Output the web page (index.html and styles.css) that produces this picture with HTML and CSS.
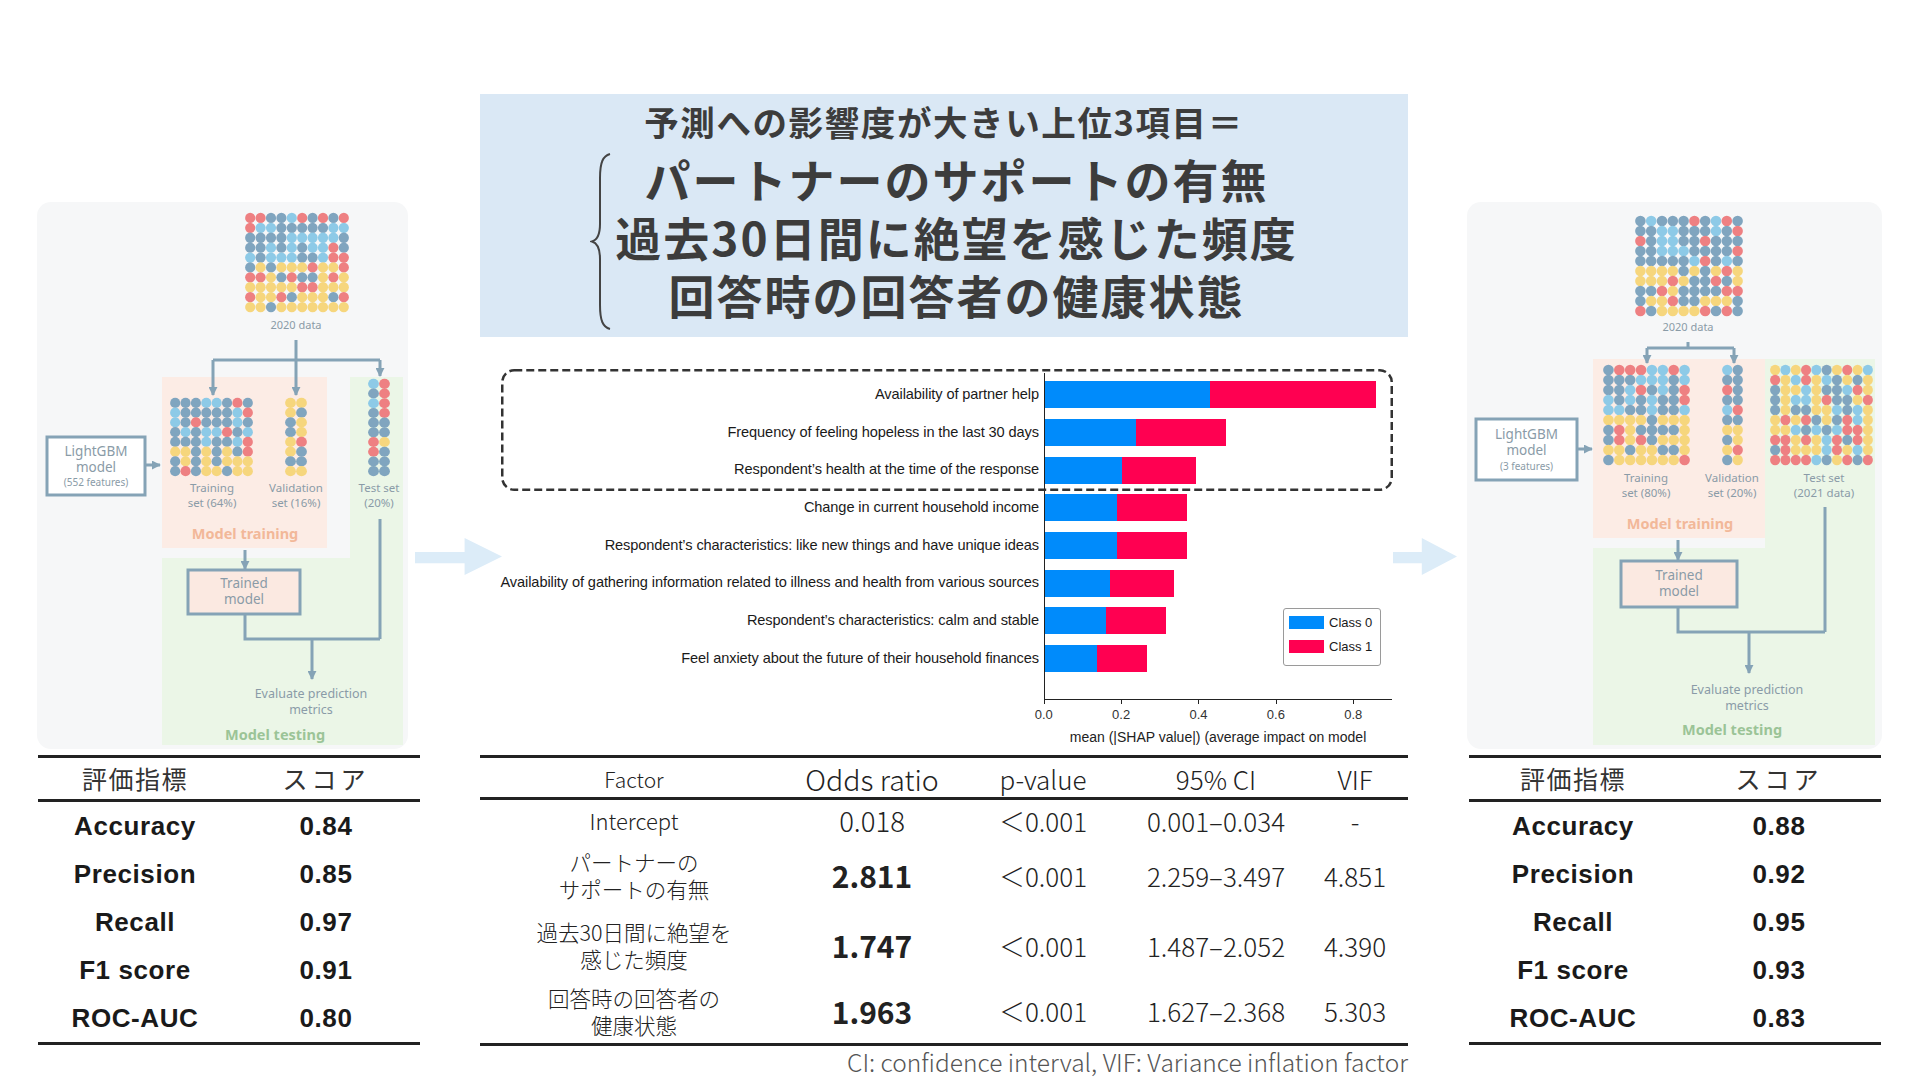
FILE: index.html
```html
<!DOCTYPE html>
<html lang="ja">
<head>
<meta charset="utf-8">
<title>予測への影響度</title>
<link rel="stylesheet" href="styles.css">
</head>
<body>
<div class="page">

  <section class="col col-left">
    <div class="panel panel-left">
      <svg class="diagram" width="371" height="547" viewBox="0 0 371 547">
        <defs>
          <marker id="ahL" viewBox="0 0 10 10" refX="9" refY="5" markerWidth="3" markerHeight="3" orient="auto"><path d="M0 0 L10 5 L0 10 Z" class="ah"/></marker>
        </defs>
        <path class="zone-test" d="M313 175 H366 V543 H125 V356 H313 Z"/>
        <rect class="zone-train" x="125" y="175" width="165" height="171"/>
        <g class="dots" data-x="208" data-y="11" data-w="104" data-h="99" data-cols="10" data-rows="10" data-split="5" data-seed="11"></g>
        <g class="dots" data-x="133" data-y="196" data-w="83" data-h="78" data-cols="8" data-rows="8" data-split="5" data-seed="23"></g>
        <g class="dots" data-x="248" data-y="196" data-w="22" data-h="78" data-cols="2" data-rows="8" data-split="0" data-seed="37"></g>
        <g class="dots" data-x="331" data-y="177" data-w="22" data-h="97" data-cols="2" data-rows="10" data-split="5" data-seed="41"></g>
        <text class="t-small" x="259" y="127">2020 data</text>
        <path class="ln" d="M259 138 V158"/>
        <path class="ln" d="M176 158 H343"/>
        <path class="ln" d="M176 158 V193" marker-end="url(#ahL)"/>
        <path class="ln" d="M259 158 V193" marker-end="url(#ahL)"/>
        <path class="ln" d="M343 158 V174" marker-end="url(#ahL)"/>
        <rect class="box" x="10" y="235" width="98" height="58"/>
        <text class="t-box" x="59" y="254">LightGBM</text>
        <text class="t-box" x="59" y="270">model</text>
        <text class="t-tiny" x="59" y="284">(552 features)</text>
        <path class="ln" d="M108 263 H123" marker-end="url(#ahL)"/>
        <text class="t-label" x="175" y="290">Training</text>
        <text class="t-label" x="175" y="305">set (64%)</text>
        <text class="t-label" x="259" y="290">Validation</text>
        <text class="t-label" x="259" y="305">set (16%)</text>
        <text class="t-label" x="342" y="290">Test set</text>
        <text class="t-label" x="342" y="305">(20%)</text>
        <text class="t-zone t-train" x="208" y="337">Model training</text>
        <path class="ln" d="M208 348 V367" marker-end="url(#ahL)"/>
        <rect class="box box-pink" x="151" y="368" width="112" height="44"/>
        <text class="t-box" x="207" y="386">Trained</text>
        <text class="t-box" x="207" y="402">model</text>
        <path class="ln" d="M208 412 V437 H343"/>
        <path class="ln" d="M343 317 V437"/>
        <path class="ln" d="M275 437 V477" marker-end="url(#ahL)"/>
        <text class="t-eval" x="274" y="496">Evaluate prediction</text>
        <text class="t-eval" x="274" y="512">metrics</text>
        <text class="t-zone t-test" x="238" y="538">Model testing</text>
      </svg>
    </div>
    <div class="metrics metrics-left">
      <div class="m-row m-head"><span>評価指標</span><span class="kana">スコア</span></div>
      <div class="m-row"><span>Accuracy</span><span>0.84</span></div>
      <div class="m-row"><span>Precision</span><span>0.85</span></div>
      <div class="m-row"><span>Recall</span><span>0.97</span></div>
      <div class="m-row"><span>F1 score</span><span>0.91</span></div>
      <div class="m-row"><span>ROC-AUC</span><span>0.80</span></div>
    </div>
  </section>

  <section class="col col-center">
    <div class="headline">
      <div class="headline-title">予測への影響度が大きい上位3項目＝</div>
      <div class="headline-body">
        <svg class="brace" width="22" height="179" viewBox="0 0 22 179">
          <path d="M20 2 C13 4 10 10 10 26 L10 72 C10 83 7 88 2 89.5 C7 91 10 96 10 107 L10 153 C10 169 13 175 20 177"/>
        </svg>
        <div class="headline-lines">
          <span>パートナーのサポートの有無</span>
          <span>過去30日間に絶望を感じた頻度</span>
          <span>回答時の回答者の健康状態</span>
        </div>
      </div>
    </div>

    <div class="chart">
      <div class="chart-body">
        <div class="chart-labels">
          <span>Availability of partner help</span>
          <span>Frequency of feeling hopeless in the last 30 days</span>
          <span>Respondent’s health at the time of the response</span>
          <span>Change in current household income</span>
          <span>Respondent’s characteristics: like new things and have unique ideas</span>
          <span>Availability of gathering information related to illness and health from various sources</span>
          <span>Respondent’s characteristics: calm and stable</span>
          <span>Feel anxiety about the future of their household finances</span>
        </div>
        <div class="chart-plot">
          <div class="bar-row"><span class="seg c0" style="width:165px"></span><span class="seg c1" style="width:166px"></span></div>
          <div class="bar-row"><span class="seg c0" style="width:90.5px"></span><span class="seg c1" style="width:90.5px"></span></div>
          <div class="bar-row"><span class="seg c0" style="width:77px"></span><span class="seg c1" style="width:74px"></span></div>
          <div class="bar-row"><span class="seg c0" style="width:72px"></span><span class="seg c1" style="width:70px"></span></div>
          <div class="bar-row"><span class="seg c0" style="width:71.5px"></span><span class="seg c1" style="width:70px"></span></div>
          <div class="bar-row"><span class="seg c0" style="width:64.5px"></span><span class="seg c1" style="width:64px"></span></div>
          <div class="bar-row"><span class="seg c0" style="width:61px"></span><span class="seg c1" style="width:60px"></span></div>
          <div class="bar-row"><span class="seg c0" style="width:51.5px"></span><span class="seg c1" style="width:50px"></span></div>
        </div>
      </div>
      <div class="ticks">
        <span>0.0</span><span>0.2</span><span>0.4</span><span>0.6</span><span>0.8</span>
      </div>
      <div class="axis-title">mean (|SHAP value|) (average impact on model</div>
      <svg class="hilite" width="892" height="122" viewBox="0 0 892 122">
        <rect x="1.25" y="1.25" width="889.5" height="119.5" rx="12" ry="12"/>
      </svg>
      <div class="legend">
        <div class="legend-item"><span class="swatch c0"></span>Class 0</div>
        <div class="legend-item"><span class="swatch c1"></span>Class 1</div>
      </div>
    </div>

    <div class="odds">
      <div class="o-row o-head">
        <span class="h-factor">Factor</span>
        <span class="h-odds">Odds ratio</span>
        <span>p-value</span>
        <span>95% CI</span>
        <span>VIF</span>
      </div>
      <div class="o-row o-r1">
        <span class="o-factor-en">Intercept</span>
        <span class="o-val">0.018</span>
        <span>＜0.001</span>
        <span>0.001–0.034</span>
        <span>-</span>
      </div>
      <div class="o-row o-r2">
        <span class="o-factor">パートナーの<br>サポートの有無</span>
        <span class="o-bold">2.811</span>
        <span>＜0.001</span>
        <span>2.259–3.497</span>
        <span>4.851</span>
      </div>
      <div class="o-row o-r3">
        <span class="o-factor">過去30日間に絶望を<br>感じた頻度</span>
        <span class="o-bold">1.747</span>
        <span>＜0.001</span>
        <span>1.487–2.052</span>
        <span>4.390</span>
      </div>
      <div class="o-row o-r4">
        <span class="o-factor">回答時の回答者の<br>健康状態</span>
        <span class="o-bold">1.963</span>
        <span>＜0.001</span>
        <span>1.627–2.368</span>
        <span>5.303</span>
      </div>
    </div>
    <p class="footnote">CI: confidence interval, VIF: Variance inflation factor</p>
  </section>

  <section class="col col-right">
    <div class="panel panel-right">
      <svg class="diagram" width="415" height="547" viewBox="0 0 415 547">
        <defs>
          <marker id="ahR" viewBox="0 0 10 10" refX="9" refY="5" markerWidth="3" markerHeight="3" orient="auto"><path d="M0 0 L10 5 L0 10 Z" class="ah"/></marker>
        </defs>
        <path class="zone-test" d="M298 157 H408 V543 H126 V346 H298 Z"/>
        <rect class="zone-train" x="126" y="157" width="172" height="179"/>
        <g class="dots" data-x="168" data-y="14" data-w="108" data-h="100" data-cols="10" data-rows="10" data-split="5" data-seed="53"></g>
        <g class="dots" data-x="136" data-y="163" data-w="87" data-h="100" data-cols="8" data-rows="10" data-split="5" data-seed="67"></g>
        <g class="dots" data-x="255" data-y="163" data-w="21" data-h="100" data-cols="2" data-rows="10" data-split="6" data-seed="71"></g>
        <g class="dots" data-x="303" data-y="163" data-w="103" data-h="100" data-cols="10" data-rows="10" data-split="4" data-seed="89" data-mix="1"></g>
        <text class="t-small" x="221" y="129">2020 data</text>
        <path class="ln" d="M221 140 V146"/>
        <path class="ln" d="M180 146 H267"/>
        <path class="ln" d="M180 146 V161" marker-end="url(#ahR)"/>
        <path class="ln" d="M267 146 V161" marker-end="url(#ahR)"/>
        <rect class="box" x="9" y="217" width="101" height="61"/>
        <text class="t-box" x="59.5" y="237">LightGBM</text>
        <text class="t-box" x="59.5" y="253">model</text>
        <text class="t-tiny" x="59.5" y="268">(3 features)</text>
        <path class="ln" d="M110 247 H125" marker-end="url(#ahR)"/>
        <text class="t-label" x="179" y="280">Training</text>
        <text class="t-label" x="179" y="295">set (80%)</text>
        <text class="t-label" x="265" y="280">Validation</text>
        <text class="t-label" x="265" y="295">set (20%)</text>
        <text class="t-label" x="357" y="280">Test set</text>
        <text class="t-label" x="357" y="295">(2021 data)</text>
        <text class="t-zone t-train" x="213" y="327">Model training</text>
        <path class="ln" d="M211 338 V358" marker-end="url(#ahR)"/>
        <rect class="box box-pink" x="154" y="359" width="116" height="46"/>
        <text class="t-box" x="212" y="378">Trained</text>
        <text class="t-box" x="212" y="394">model</text>
        <path class="ln" d="M211 405 V430 H358"/>
        <path class="ln" d="M358 305 V430"/>
        <path class="ln" d="M282 430 V471" marker-end="url(#ahR)"/>
        <text class="t-eval" x="280" y="492">Evaluate prediction</text>
        <text class="t-eval" x="280" y="508">metrics</text>
        <text class="t-zone t-test" x="265" y="533">Model testing</text>
      </svg>
    </div>
    <div class="metrics metrics-right">
      <div class="m-row m-head"><span>評価指標</span><span class="kana">スコア</span></div>
      <div class="m-row"><span>Accuracy</span><span>0.88</span></div>
      <div class="m-row"><span>Precision</span><span>0.92</span></div>
      <div class="m-row"><span>Recall</span><span>0.95</span></div>
      <div class="m-row"><span>F1 score</span><span>0.93</span></div>
      <div class="m-row"><span>ROC-AUC</span><span>0.83</span></div>
    </div>
  </section>

  <div class="flow-arrow arrow-a"></div>
  <div class="flow-arrow arrow-b"></div>
</div>
<script src="script.js"></script>
</body>
</html>
```

FILE: styles.css
```css
html, body {
  margin: 0;
  padding: 0;
  background: #ffffff;
}

body {
  font-family: "Noto Sans CJK JP", "Noto Sans", sans-serif;
  color: #222222;
}

.page {
  position: relative;
  width: 1920px;
  height: 1080px;
  box-sizing: border-box;
  padding-left: 37px;
  display: flex;
  align-items: flex-start;
  overflow: hidden;
}

.col {
  display: flex;
  flex-direction: column;
  flex: none;
}

.col-left { width: 383px; }
.col-center { width: 928px; margin-left: 60px; }
.col-right { width: 415px; margin-left: 59px; }

/* ---------- side panels ---------- */
.panel {
  margin-top: 202px;
  height: 547px;
  background: #f6f7f8;
  border-radius: 14px;
  overflow: hidden;
}
.panel-left { width: 371px; }
.panel-right { width: 415px; }

.diagram { display: block; }

.zone-test { fill: #ebf6e7; }
.zone-train { fill: #fcece5; }

.ln {
  fill: none;
  stroke: #85a3b6;
  stroke-width: 3;
}
.ah { fill: #85a3b6; }

.box {
  fill: #ffffff;
  stroke: #85a3b6;
  stroke-width: 3;
}
.box-pink { fill: #fbe9e1; }

.diagram text {
  font-family: "Noto Sans", "Noto Sans CJK JP", sans-serif;
  text-anchor: middle;
  fill: #8a9ba7;
}
.t-small { font-size: 11px; }
.t-box { font-size: 13.5px; }
.t-tiny { font-size: 10px; }
.t-label { font-size: 11.5px; }
.t-eval { font-size: 12.5px; }
.t-zone { font-size: 14.5px; font-weight: 700; }
.diagram .t-train { fill: #f2b899; }
.diagram .t-test { fill: #9bc497; }

/* ---------- metrics tables ---------- */
.metrics {
  margin-top: 6px;
  border-top: 3px solid #222;
  border-bottom: 3px solid #222;
}
.metrics-left { width: 382px; margin-left: 1px; }
.metrics-right { width: 412px; margin-left: 2px; }

.m-row {
  display: grid;
  height: 48px;
  align-items: center;
  justify-items: center;
  font-family: "Liberation Sans", Arial, sans-serif;
  font-weight: 700;
  font-size: 26px;
  letter-spacing: 0.6px;
  color: #1a1a1a;
}
.metrics-left .m-row { grid-template-columns: 194px 188px; }
.metrics-right .m-row { grid-template-columns: 208px 204px; }

.m-row.m-head {
  height: 40px;
  padding-bottom: 1px;
  border-bottom: 3px solid #222;
  font-family: "Noto Sans CJK JP", sans-serif;
  font-weight: 400;
  font-size: 25px;
  letter-spacing: 1.5px;
  color: #333;
}
.m-head .kana { letter-spacing: 4px; }

/* ---------- headline ---------- */
.headline {
  margin-top: 94px;
  height: 243px;
  background: #dae8f5;
  display: flex;
  flex-direction: column;
  align-items: center;
  color: #3c3c3c;
}
.headline-title {
  margin-top: 7px;
  font-weight: 700;
  font-size: 34.5px;
  line-height: 40px;
  letter-spacing: 1.6px;
}
.headline-body {
  margin-top: 8px;
  display: flex;
  align-items: flex-start;
}
.brace {
  flex: none;
  display: block;
  margin-top: 3px;
}
.brace path {
  fill: none;
  stroke: #444;
  stroke-width: 2;
}
.headline-lines {
  margin-left: 3px;
  display: flex;
  flex-direction: column;
  align-items: center;
}
.headline-lines span {
  font-weight: 700;
  font-size: 46px;
  line-height: 58px;
  letter-spacing: 2px;
}

/* ---------- SHAP chart ---------- */
.chart {
  position: relative;
  margin-top: 30px;
  height: 383px;
  padding-top: 6px;
  box-sizing: border-box;
  font-family: "Liberation Sans", Arial, sans-serif;
  color: #1a1a1a;
}
.chart-body {
  display: flex;
}
.chart-labels {
  width: 561px;
  padding: 3px 2px 0 0;
  box-sizing: border-box;
  display: flex;
  flex-direction: column;
  align-items: flex-end;
}
.chart-labels span {
  height: 37.7px;
  line-height: 37.7px;
  font-size: 14.6px;
  letter-spacing: -0.1px;
  white-space: nowrap;
}
.chart-plot {
  width: 348px;
  height: 327px;
  padding-top: 3px;
  box-sizing: border-box;
  border-left: 1.3px solid #222;
  border-bottom: 1.3px solid #222;
  display: flex;
  flex-direction: column;
  margin-left: 3px;
}
.bar-row {
  height: 37.7px;
  display: flex;
  align-items: center;
}
.seg {
  display: block;
  height: 27px;
}
.c0 { background: #008bfb; }
.c1 { background: #ff0051; }

.ticks {
  margin-left: 525px;
  display: flex;
  height: 22px;
}
.ticks span {
  width: 77.4px;
  flex: none;
  text-align: center;
  font-size: 13px;
  line-height: 30px;
  color: #333;
  position: relative;
}
.ticks span::before {
  content: "";
  position: absolute;
  left: 50%;
  top: 0;
  width: 1px;
  height: 4px;
  background: #222;
}
.axis-title {
  margin-left: 564px;
  width: 348px;
  text-align: center;
  font-size: 14px;
  line-height: 20px;
  margin-top: 5px;
  color: #222;
  white-space: nowrap;
}

.hilite {
  position: absolute;
  left: 21px;
  top: 2px;
}
.hilite rect {
  fill: none;
  stroke: #333;
  stroke-width: 2.5;
  stroke-dasharray: 8 4;
}

.legend {
  position: absolute;
  left: 803px;
  top: 241px;
  width: 98px;
  height: 58px;
  box-sizing: border-box;
  border: 1.5px solid #9a9a9a;
  border-radius: 3px;
  background: #fff;
  padding: 6px 0 0 5px;
  display: flex;
  flex-direction: column;
  gap: 9px;
}
.legend-item {
  display: flex;
  align-items: center;
  gap: 5px;
  font-size: 13px;
  line-height: 15px;
}
.swatch {
  display: block;
  width: 35px;
  height: 13px;
}

/* ---------- odds table ---------- */
.odds {
  margin-top: 5px;
  border-top: 3px solid #222;
  border-bottom: 3px solid #222;
  font-family: "Noto Sans CJK JP", sans-serif;
  color: #222;
}
.o-row {
  display: grid;
  grid-template-columns: 308px 168px 174px 172px 106px;
  align-items: center;
  justify-items: center;
  font-size: 26px;
  font-weight: 300;
}
.o-head {
  height: 39px;
  border-bottom: 3px solid #222;
}
.h-factor { font-size: 21px; }
.h-odds { font-size: 28.5px; }
.o-r1 { height: 38px; }
.o-r2 { height: 74px; }
.o-r3 { height: 66px; }
.o-r4 { height: 65px; }
.o-factor {
  font-size: 21.5px;
  line-height: 27px;
  text-align: center;
}
.o-factor-en { font-size: 22px; }
.o-val { font-size: 27.5px; }
.o-bold {
  font-size: 30px;
  font-weight: 700;
}

.footnote {
  margin: 2px 0 0;
  text-align: right;
  font-family: "Noto Sans CJK JP", sans-serif;
  font-weight: 300;
  font-size: 24.5px;
  line-height: 28px;
  color: #555;
}

/* ---------- flow arrows ---------- */
.flow-arrow {
  position: absolute;
  top: 538px;
  height: 37px;
  background: #dcecf8;
}
.arrow-a {
  left: 415px;
  width: 87px;
  clip-path: polygon(0 38%, 57% 38%, 57% 0, 100% 50%, 57% 100%, 57% 68%, 0 68%);
}
.arrow-b {
  left: 1393px;
  width: 64px;
  clip-path: polygon(0 38%, 45% 38%, 45% 0, 100% 50%, 45% 100%, 45% 68%, 0 68%);
}
```

FILE: script.js
```js
(function () {
  var NS = 'http://www.w3.org/2000/svg';
  var STEEL = '#80a5bf', LIGHT = '#8dcae7', RED = '#ee8082', YELLOW = '#f6d67d';
  var upper = [STEEL, STEEL, LIGHT, RED, STEEL, LIGHT, STEEL];
  var lower = [YELLOW, STEEL, RED, YELLOW, STEEL, YELLOW];
  var mixed = [STEEL, LIGHT, RED, YELLOW, STEEL, RED, YELLOW];

  function rng(seed) {
    return function () {
      seed |= 0; seed = seed + 0x6D2B79F5 | 0;
      var t = Math.imul(seed ^ seed >>> 15, 1 | seed);
      t = t + Math.imul(t ^ t >>> 7, 61 | t) ^ t;
      return ((t ^ t >>> 14) >>> 0) / 4294967296;
    };
  }

  var groups = document.querySelectorAll('g.dots');
  for (var k = 0; k < groups.length; k++) {
    var g = groups[k], d = g.dataset;
    var x = +d.x, y = +d.y, w = +d.w, h = +d.h;
    var cols = +d.cols, rows = +d.rows;
    var split = d.split !== undefined ? +d.split : Math.round(rows / 2);
    var cw = w / cols, ch = h / rows;
    var rand = rng(+d.seed);
    for (var i = 0; i < rows; i++) {
      for (var j = 0; j < cols; j++) {
        var pal = d.mix ? mixed : (i < split ? upper : lower);
        var e = document.createElementNS(NS, 'ellipse');
        e.setAttribute('cx', (x + cw * j + cw / 2).toFixed(2));
        e.setAttribute('cy', (y + ch * i + ch / 2).toFixed(2));
        e.setAttribute('rx', (cw / 2 - 0.1).toFixed(2));
        e.setAttribute('ry', (ch / 2 + 0.2).toFixed(2));
        e.setAttribute('fill', pal[Math.floor(rand() * pal.length)]);
        g.appendChild(e);
      }
    }
  }
})();
```
